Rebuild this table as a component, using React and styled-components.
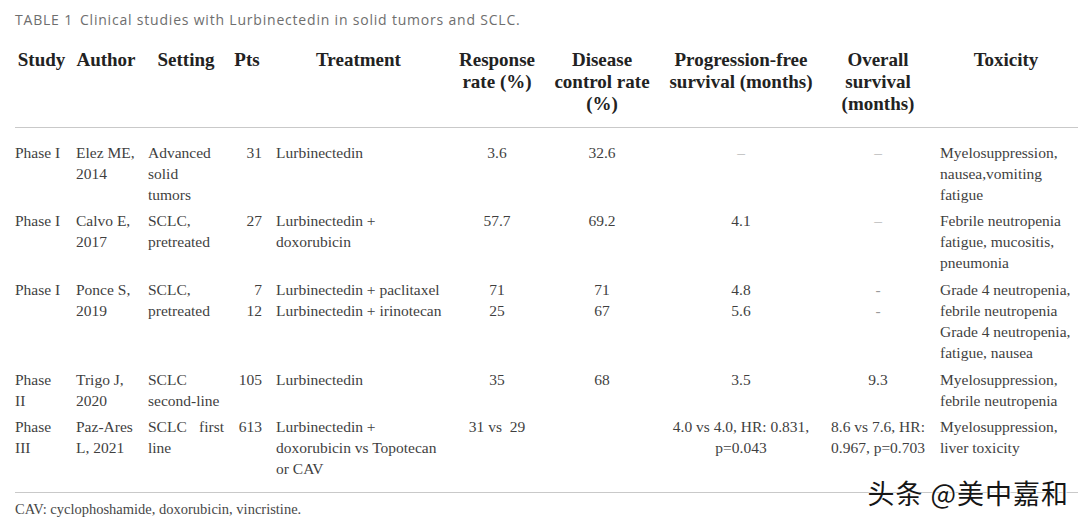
import React from "react";
import styled, { createGlobalStyle } from "styled-components";

const GlobalStyle = createGlobalStyle`
  html, body {
    margin: 0;
    padding: 0;
    background: #ffffff;
  }
  body {
    width: 1080px;
    height: 524px;
    overflow: hidden;
  }
`;

const COLUMNS = [
  { track: 61, pr: 8, align: "left" },
  { track: 72, pr: 12, align: "left" },
  { track: 84, pr: 8, align: "left" },
  { track: 44, pr: 14, align: "right" },
  { track: 179, pr: 14, align: "left" },
  { track: 98, pr: 14, align: "center" },
  { track: 113, pr: 15, align: "center" },
  { track: 165, pr: 15, align: "center" },
  { track: 109, pr: 15, align: "center" },
  { track: 138, pr: 6, align: "left" }
];

const HEADERS = [
  ["Study"],
  ["Author"],
  ["Setting"],
  ["Pts"],
  ["Treatment"],
  ["Response", "rate (%)"],
  ["Disease", "control rate", "(%)"],
  ["Progression-free", "survival (months)"],
  ["Overall", "survival", "(months)"],
  ["Toxicity"]
];

const ROWS = [
  {
    top: 14,
    cells: [
      ["Phase I"],
      ["Elez ME,", "2014"],
      ["Advanced", "solid", "tumors"],
      ["31"],
      ["Lurbinectedin"],
      ["3.6"],
      ["32.6"],
      [{ dash: "–" }],
      [{ dash: "–" }],
      ["Myelosuppression,", "nausea,vomiting", "fatigue"]
    ]
  },
  {
    top: 5,
    cells: [
      ["Phase I"],
      ["Calvo E,", "2017"],
      ["SCLC,", "pretreated"],
      ["27"],
      ["Lurbinectedin +", "doxorubicin"],
      ["57.7"],
      ["69.2"],
      ["4.1"],
      [{ dash: "–" }],
      ["Febrile neutropenia", "fatigue, mucositis,", "pneumonia"]
    ]
  },
  {
    top: 6,
    cells: [
      ["Phase I"],
      ["Ponce S,", "2019"],
      ["SCLC,", "pretreated"],
      ["7", "12"],
      ["Lurbinectedin + paclitaxel", "Lurbinectedin + irinotecan"],
      ["71", "25"],
      ["71", "67"],
      ["4.8", "5.6"],
      [{ dash: "-" }, { dash: "-" }],
      [
        "Grade 4 neutropenia,",
        "febrile neutropenia",
        "Grade 4 neutropenia,",
        "fatigue, nausea"
      ]
    ]
  },
  {
    top: 6,
    cells: [
      ["Phase", "II"],
      ["Trigo J,", "2020"],
      ["SCLC", "second-line"],
      ["105"],
      ["Lurbinectedin"],
      ["35"],
      ["68"],
      ["3.5"],
      ["9.3"],
      ["Myelosuppression,", "febrile neutropenia"]
    ]
  },
  {
    top: 5,
    cells: [
      ["Phase", "III"],
      ["Paz-Ares", "L, 2021"],
      [{ spread: ["SCLC", "first"] }, "line"],
      ["613"],
      ["Lurbinectedin +", "doxorubicin vs Topotecan", "or CAV"],
      ["31 vs\u00a0\u00a029"],
      [""],
      ["4.0 vs 4.0, HR: 0.831,", "p=0.043"],
      ["8.6 vs 7.6, HR:", "0.967, p=0.703"],
      ["Myelosuppression,", "liver toxicity"]
    ]
  }
];

const Page = styled.div`
  position: relative;
  width: 1080px;
  height: 524px;
  padding: 12px 0 0 15px;
  box-sizing: border-box;
`;

const Caption = styled.div`
  font-family: "Open Sans", "Liberation Sans", sans-serif;
  font-size: 14px;
  line-height: 16px;
  color: #6e6e6e;
  white-space: nowrap;
  letter-spacing: 0.8px;

  & > b {
    font-weight: 400;
    margin-right: 7px;
  }
`;

const Table = styled.div`
  margin-top: 21px;
  width: 1063px;
`;

const Row = styled.div`
  display: grid;
  grid-template-columns: ${COLUMNS.map(c => `${c.track}px`).join(" ")};
  padding-top: ${props => props.$top}px;
  padding-bottom: ${props => props.$bottom}px;
  border-bottom: ${props => (props.$rule ? "1px solid #c9c9c9" : "none")};
`;

const HeadCell = styled.div`
  padding-right: ${props => props.$pr}px;
  text-align: center;
  font-family: "Liberation Serif", "Times New Roman", serif;
  font-weight: 700;
  font-size: 19px;
  line-height: 22px;
  color: #222222;
  white-space: nowrap;
`;

const Cell = styled.div`
  padding-right: ${props => props.$pr}px;
  text-align: ${props => props.$align};
  font-family: "Liberation Serif", "Times New Roman", serif;
  font-size: 15.5px;
  line-height: 21px;
  color: #3f3f3f;
`;

const Line = styled.div`
  white-space: nowrap;
  min-height: 21px;
`;

const Dash = styled.span`
  color: #9a9a9a;
`;

const Spread = styled.div`
  display: flex;
  justify-content: space-between;
  min-height: 21px;
`;

const Note = styled.div`
  margin-top: 8px;
  font-family: "Liberation Serif", "Times New Roman", serif;
  font-size: 14.5px;
  line-height: 17px;
  color: #474747;
`;

const Watermark = styled.div`
  position: absolute;
  right: 11px;
  top: 477px;
  font-family: "Noto Sans CJK SC", "Noto Sans", sans-serif;
  font-size: 27px;
  line-height: 32px;
  color: #161616;
  letter-spacing: 1px;
  white-space: nowrap;
  text-shadow: 0 0 2px #ffffff, 0 0 2px #ffffff, 1px 1px 1px #ffffff;
`;

function renderLine(line, i) {
  if (line && typeof line === "object" && line.dash) {
    return (
      <Line key={i}>
        <Dash>{line.dash}</Dash>
      </Line>
    );
  }
  if (line && typeof line === "object" && line.spread) {
    return (
      <Spread key={i}>
        {line.spread.map(word => (
          <span key={word}>{word}</span>
        ))}
      </Spread>
    );
  }
  return <Line key={i}>{line}</Line>;
}

export default function App() {
  return (
    <Page>
      <GlobalStyle />
      <Caption>
        <b>TABLE 1</b>Clinical studies with Lurbinectedin in solid tumors and
        SCLC.
      </Caption>
      <Table>
        <Row $top={0} $bottom={12} $rule>
          {HEADERS.map((lines, i) => (
            <HeadCell key={i} $pr={COLUMNS[i].pr}>
              {lines.map(l => (
                <div key={l}>{l}</div>
              ))}
            </HeadCell>
          ))}
        </Row>
        {ROWS.map((row, r) => (
          <Row
            key={r}
            $top={row.top}
            $bottom={r === ROWS.length - 1 ? 13 : 0}
            $rule={r === ROWS.length - 1}
          >
            {row.cells.map((lines, c) => (
              <Cell key={c} $pr={COLUMNS[c].pr} $align={COLUMNS[c].align}>
                {lines.map(renderLine)}
              </Cell>
            ))}
          </Row>
        ))}
      </Table>
      <Note>CAV: cyclophoshamide, doxorubicin, vincristine.</Note>
      <Watermark>头条 @美中嘉和</Watermark>
    </Page>
  );
}
